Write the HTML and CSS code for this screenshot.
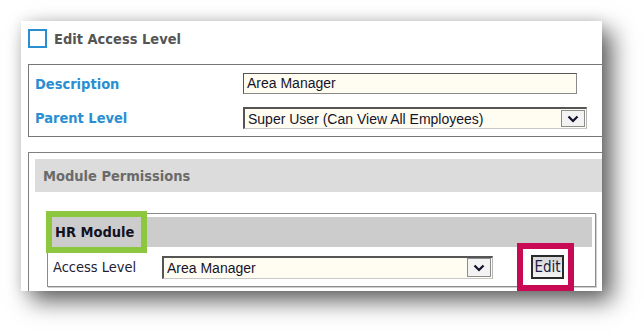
FILE: index.html
```html
<!DOCTYPE html>
<html lang="en">
<head>
    <meta charset="UTF-8" />
    <meta name="viewport" content="width=device-width, initial-scale=1.0" />
    <title>Edit Access Level</title>
    <link rel="stylesheet" href="styles.css">
</head>
<body>
<div class="card">
    <div class="title"><span class="check"></span>Edit Access Level</div>

    <div class="details">
        <div class="field">
            <span class="label">Description</span>
            <div class="text-box">Area Manager</div>
        </div>
        <div class="field">
            <span class="label">Parent Level</span>
            <div class="select parent-select">
                <span class="value">Super User (Can View All Employees)</span>
                <span class="arrow"><svg width="12" height="8" viewBox="0 0 12 8"><polyline points="1.5,1.5 6,6 10.5,1.5" fill="none" stroke="#10102a" stroke-width="2.2"/></svg></span>
            </div>
        </div>
    </div>

    <div class="modules">
        <div class="bar">Module Permissions</div>
        <div class="module">
            <div class="module-head">HR Module</div>
            <div class="module-row">
                <span class="row-label">Access Level</span>
                <div class="select level-select">
                    <span class="value">Area Manager</span>
                    <span class="arrow"><svg width="12" height="8" viewBox="0 0 12 8"><polyline points="1.5,1.5 6,6 10.5,1.5" fill="none" stroke="#10102a" stroke-width="2.2"/></svg></span>
                </div>
                <button class="edit">Edit</button>
            </div>
        </div>
    </div>

    <!-- annotation frames -->
    <div class="mark mark-green"></div>
    <div class="mark mark-red"></div>
</div>
</body>
</html>
```

FILE: styles.css
```css
html, body {
    margin: 0;
    padding: 0;
}

body {
    background: #ffffff;
    font-family: "DejaVu Sans Condensed", "DejaVu Sans", sans-serif;
    width: 644px;
    height: 333px;
    overflow: hidden;
}

.card {
    position: relative;
    margin: 21px 0 0 21px;
    width: 581px;
    height: 270px;
    background: #ffffff;
    overflow: hidden;
    padding: 8px 0 0 7px;
    box-sizing: border-box;
    box-shadow: 10px 10px 22px rgba(0, 0, 0, 0.62), 0 0 12px rgba(0, 0, 0, 0.1);
}

.title {
    display: flex;
    align-items: center;
    height: 19px;
    margin-bottom: 16px;
    font-size: 14.5px;
    font-weight: bold;
    color: #555555;
}

.check {
    width: 15px;
    height: 15px;
    border: 2px solid #2a8fd2;
    margin-right: 7px;
}

.details {
    width: 640px;
    border: 1px solid #777777;
    padding: 8px 0 7px 6px;
    display: flex;
    flex-direction: column;
    gap: 13px;
}

.field {
    display: flex;
    align-items: center;
}

.label {
    width: 208px;
    font-size: 14.5px;
    font-weight: bold;
    color: #2a8fd2;
}

.text-box {
    width: 334px;
    height: 21px;
    box-sizing: border-box;
    border: 1px solid #8a8a8a;
    border-top-color: #555555;
    border-left-color: #555555;
    background: #fffdf2;
    font-family: "Liberation Sans", Arial, sans-serif;
    font-size: 14px;
    color: #14142a;
    padding-left: 3px;
    line-height: 19px;
}

.select {
    display: flex;
    align-items: center;
    justify-content: space-between;
    box-sizing: border-box;
    border-style: solid;
    border-width: 2px 1px 1px 2px;
    border-color: #555555 #b5b5b5 #c8c8c8 #555555;
    background: #fffdf2;
    font-family: "Liberation Sans", Arial, sans-serif;
    font-size: 14px;
    color: #14142a;
    padding: 0 1px 0 3px;
}

.parent-select {
    width: 344px;
    height: 22px;
}

.level-select {
    width: 331px;
    height: 23px;
}

.arrow {
    display: flex;
    align-items: center;
    justify-content: center;
    width: 24px;
    height: 17px;
    box-sizing: border-box;
    border: 1px solid #8c8c8c;
    background: #f3f3f3;
}

.level-select .arrow {
    height: 19px;
}

.modules {
    width: 640px;
    margin-top: 15px;
    border: 1px solid #808080;
    padding: 6px;
    box-sizing: border-box;
}

.bar {
    height: 33px;
    background: #dcdcdc;
    padding-left: 8px;
    display: flex;
    align-items: center;
    font-size: 14.5px;
    font-weight: bold;
    color: #6a6a6a;
}

.module {
    width: 549px;
    box-sizing: border-box;
    margin: 21px 0 0 12px;
    border: 1px solid #8c8c8c;
    box-shadow: 1px 1px 0 #d0d0d0;
    padding: 3px 3px 0;
}

.module-head {
    height: 30px;
    background: #cccccc;
    padding-left: 4px;
    display: flex;
    align-items: center;
    font-size: 14.5px;
    font-weight: bold;
    color: #111122;
}

.module-row {
    display: flex;
    align-items: center;
    padding: 8px 0 7px 2px;
}

.row-label {
    width: 109px;
    font-size: 14.5px;
    color: #222233;
}

.edit {
    margin-left: 38px;
    width: 33px;
    height: 24px;
    padding: 0;
    border: 2px solid #2a2a2a;
    background: linear-gradient(#d6d6d6, #f4f4f4);
    font-family: "DejaVu Sans Condensed", "DejaVu Sans", sans-serif;
    font-size: 15px;
    color: #1a1a44;
}

.mark {
    position: absolute;
    box-sizing: border-box;
    border: 6px solid;
}

.mark-green {
    left: 25px;
    top: 190px;
    width: 101px;
    height: 42px;
    border-color: #8dc63f;
}

.mark-red {
    left: 496px;
    top: 222px;
    width: 57px;
    height: 48px;
    border-color: #c80a54;
}
```
